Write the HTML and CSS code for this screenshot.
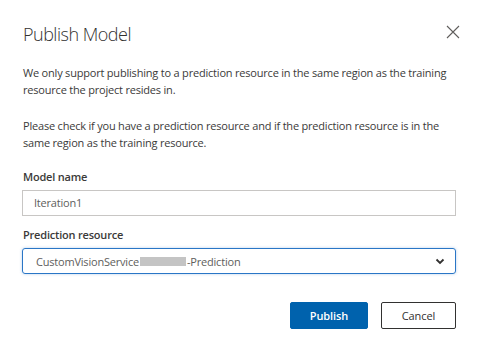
FILE: index.html
```html
<!doctype html>
<html lang="en">
<head>
    <meta charset="UTF-8">
    <title>Publish Model</title>
    <link rel="stylesheet" href="styles.css">
</head>
<body>
    <div class="dialog">
        <div class="dialog-head">
            <h1 class="dialog-title">Publish Model</h1>
            <button class="close" aria-label="Close">
                <svg width="14" height="14" viewBox="0 0 14 14">
                    <path d="M1 1 L13 13 M13 1 L1 13" stroke="#605e5c" stroke-width="1.1" fill="none"/>
                </svg>
            </button>
        </div>
        <p class="note">We only support publishing to a prediction resource in the same region as the training resource the project resides in.</p>
        <p class="note">Please check if you have a prediction resource and if the prediction resource is in the same region as the training resource.</p>

        <div class="field">
            <label class="field-label" for="modelName">Model name</label>
            <div class="text-box" id="modelName">Iteration1</div>
        </div>
        <div class="field">
            <label class="field-label">Prediction resource</label>
            <div class="select-box">
                <span class="select-text">CustomVisionService<span class="redacted"></span>-Prediction</span>
                <svg class="chevron" width="10" height="7" viewBox="0 0 10 7">
                    <path d="M1.5 1.5 L5 5 L8.5 1.5" stroke="#323130" stroke-width="1.8" fill="none"/>
                </svg>
            </div>
        </div>

        <div class="actions">
            <button class="btn btn-primary">Publish</button>
            <button class="btn btn-default">Cancel</button>
        </div>
    </div>
</body>
</html>
```

FILE: styles.css
```css
* {margin:0; padding:0; box-sizing: border-box;}
body {
    background: #fff;
    font-family: "Open Sans", "Noto Sans", sans-serif;
    color: #323130;
}
.dialog {
    padding: 20px 22px 0 22px;
}
.dialog-head {
    display: flex;
    justify-content: space-between;
    align-items: flex-start;
    height: 44px;
}
.dialog-title {
    font-size: 18px;
    font-weight: 300;
    letter-spacing: -0.5px;
    line-height: 28px;
    color: #323130;
    margin-left: 1px;
}
.close {
    border: none;
    background: none;
    margin-top: 2px;
    margin-right: -7px;
    width: 20px;
    height: 20px;
    display: flex;
    align-items: center;
    justify-content: center;
}
.note {
    font-size: 11px;
    letter-spacing: -0.2px;
    line-height: 17px;
    color: #3b3a39;
    margin-bottom: 19px;
    margin-left: 1px;
}
.field {
    margin-bottom: 12px;
}
.field-label {
    display: block;
    font-size: 11px;
    font-weight: 600;
    letter-spacing: -0.2px;
    line-height: 17px;
    color: #3b3a39;
    margin-bottom: 5px;
    margin-left: 1px;
    margin-top: -2px;
}
.text-box {
    height: 26px;
    border: 1px solid #c8c6c4;
    font-size: 11px;
    letter-spacing: -0.2px;
    line-height: 24px;
    padding-left: 11px;
    color: #605e5c;
}
.select-box {
    height: 26px;
    border: 1px solid #2a76c6;
    border-radius: 3px;
    box-shadow: 0 0 3px rgba(42, 118, 198, 0.35);
    display: flex;
    align-items: center;
    justify-content: space-between;
    padding: 0 10px 0 13px;
}
.select-text {
    font-size: 11px;
    letter-spacing: -0.2px;
    color: #605e5c;
    display: flex;
    align-items: center;
}
.redacted {
    display: inline-block;
    width: 46px;
    height: 9px;
    margin: 0 1px;
    background: #c4c4c4;
}
.actions {
    display: flex;
    justify-content: flex-end;
    gap: 13px;
    margin-top: 28px;
}
.btn {
    height: 27px;
    font-family: inherit;
    font-size: 11px;
    letter-spacing: -0.1px;
    border-radius: 2px;
    cursor: pointer;
}
.btn-primary {
    width: 78px;
    background: #0062ad;
    border: 1px solid #0062ad;
    color: #fff;
    font-weight: 600;
}
.btn-default {
    width: 75px;
    background: #fff;
    border: 1px solid #323130;
    color: #323130;
}
```
